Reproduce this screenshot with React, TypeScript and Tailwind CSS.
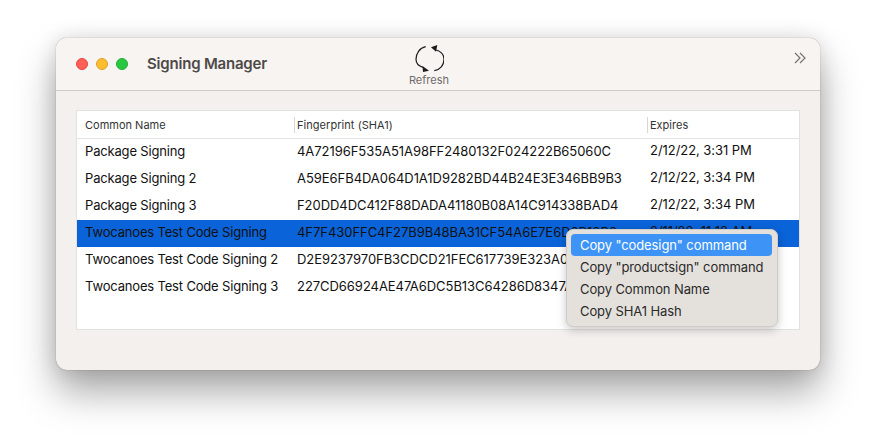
const rows = [
  { name: 'Package Signing', hash: '4A72196F535A51A98FF2480132F024222B65060C', expires: '2/12/22, 3:31 PM' },
  { name: 'Package Signing 2', hash: 'A59E6FB4DA064D1A1D9282BD44B24E3E346BB9B3', expires: '2/12/22, 3:34 PM' },
  { name: 'Package Signing 3', hash: 'F20DD4DC412F88DADA41180B08A14C914338BAD4', expires: '2/12/22, 3:34 PM' },
  { name: 'Twocanoes Test Code Signing', hash: '4F7F430FFC4F27B9B48BA31CF54A6E7E6D0B10B0', expires: '2/11/22, 11:12 AM', selected: true },
  { name: 'Twocanoes Test Code Signing 2', hash: 'D2E9237970FB3CDCD21FEC617739E323A0B10C2D', expires: '2/11/22, 11:14 AM' },
  { name: 'Twocanoes Test Code Signing 3', hash: '227CD66924AE47A6DC5B13C64286D8347A1B0E4F', expires: '2/11/22, 11:15 AM' },
];

const menuItems = ['Copy "codesign" command', 'Copy "productsign" command', 'Copy Common Name', 'Copy SHA1 Hash'];

function RefreshIcon() {
  return (
    <svg width="30" height="28" viewBox="-1 0 30 28" fill="none" className="text-[#1c1c1c]">
      <path d="M10.7 1.7C4.5 3 1 8.5 1 14.3C1 18 3.5 21 8 22.3" stroke="currentColor" strokeWidth="1.2" />
      <path d="M21 5C26.5 6.5 29 10 29 14.3C29 20 25 25 19.3 25.7" stroke="currentColor" strokeWidth="1.2" />
      <path d="M16 2.3L22.3 0L21 6.7Z" fill="currentColor" />
      <path d="M7.5 21L14 25.7L8 27Z" fill="currentColor" />
    </svg>
  );
}

export default function App() {
  return (
    <div className="h-[444px] w-[876px] bg-white pl-[56px] pt-[38px] font-['Inter',sans-serif] overflow-hidden">
      <div className="relative flex h-[332px] w-[764px] flex-col rounded-[11px] bg-[#f3f0ed] shadow-[0_0_1px_rgba(0,0,0,0.55),0_22px_38px_rgba(0,0,0,0.34),0_0_20px_rgba(0,0,0,0.12)]">
        <div className="relative flex h-[53px] shrink-0 items-center rounded-t-[11px] border-b border-[#cfcbc8] bg-[#f8f4f1] pl-[20px]">
          <div className="flex gap-2">
            <span className="h-3 w-3 rounded-full border border-[#e5483f] bg-[#fe5f57]" />
            <span className="h-3 w-3 rounded-full border border-[#e0a028] bg-[#febc2e]" />
            <span className="h-3 w-3 rounded-full border border-[#22ae35] bg-[#29c840]" />
          </div>
          <span className="ml-[19px] text-[15px] font-semibold tracking-[-0.2px] text-[#4d4a49]">Signing Manager</span>
          <div className="absolute left-[352px] top-[7px] flex w-[42px] flex-col items-center">
            <RefreshIcon />
            <span className="mt-[1px] text-[11px] leading-[13px] text-[#6f6c6b]">Refresh</span>
          </div>
          <svg width="12" height="12" viewBox="0 0 12 12" fill="none" className="absolute right-[14px] top-[14px] text-[#77726f]">
            <path d="M1 1L6 6L1 11M6 1L11 6L6 11" stroke="currentColor" strokeWidth="1.2" />
          </svg>
        </div>
        <div className="px-[20px] pt-[19px]">
          <div className="h-[220px] border border-[#e4e1df] bg-white text-[13px] text-[#111]">
            <div className="flex h-[28px] items-center border-b border-[#e6e4e2] pt-[1px] text-[11px] text-[#333]">
              <div className="w-[217px] pl-[8px]">Common Name</div>
              <div className="h-4 w-[353px] border-l border-[#d8d6d4] pl-[2px] leading-4 tracking-[0.05px]">Fingerprint (SHA1)</div>
              <div className="h-4 border-l border-[#d8d6d4] pl-[2px] leading-4">Expires</div>
            </div>
            {rows.map((row) => (
              <div key={row.name} className={`flex h-[27px] items-center pb-[2px] ${row.selected ? 'bg-[#0a63d8]' : ''}`}>
                <div className="w-[218px] pl-[8px] tracking-[-0.17px]">{row.name}</div>
                <div className="w-[353px] pl-[2px] tracking-[-0.05px] whitespace-nowrap">{row.hash}</div>
                <div className="pb-[2px] pl-[2px] tracking-[-0.05px] whitespace-nowrap">{row.expires}</div>
              </div>
            ))}
          </div>
        </div>
        <div className="absolute left-[510px] top-[191px] h-[98px] w-[212px] rounded-[7px] border border-[#cfccc8] bg-[#e4e1dc] pl-[4px] pr-[5px] pt-[4px] text-[13px] tracking-[-0.1px] text-[#2a2a2a] shadow-[0_3px_10px_rgba(0,0,0,0.22)]">
          {menuItems.map((item, i) => (
            <div key={item} className={`flex h-[22px] items-center rounded-[4px] pl-[9px] pt-[2px] ${i === 0 ? 'bg-[#3d94f6] text-white' : ''}`}>
              {item}
            </div>
          ))}
        </div>
      </div>
    </div>
  );
}
